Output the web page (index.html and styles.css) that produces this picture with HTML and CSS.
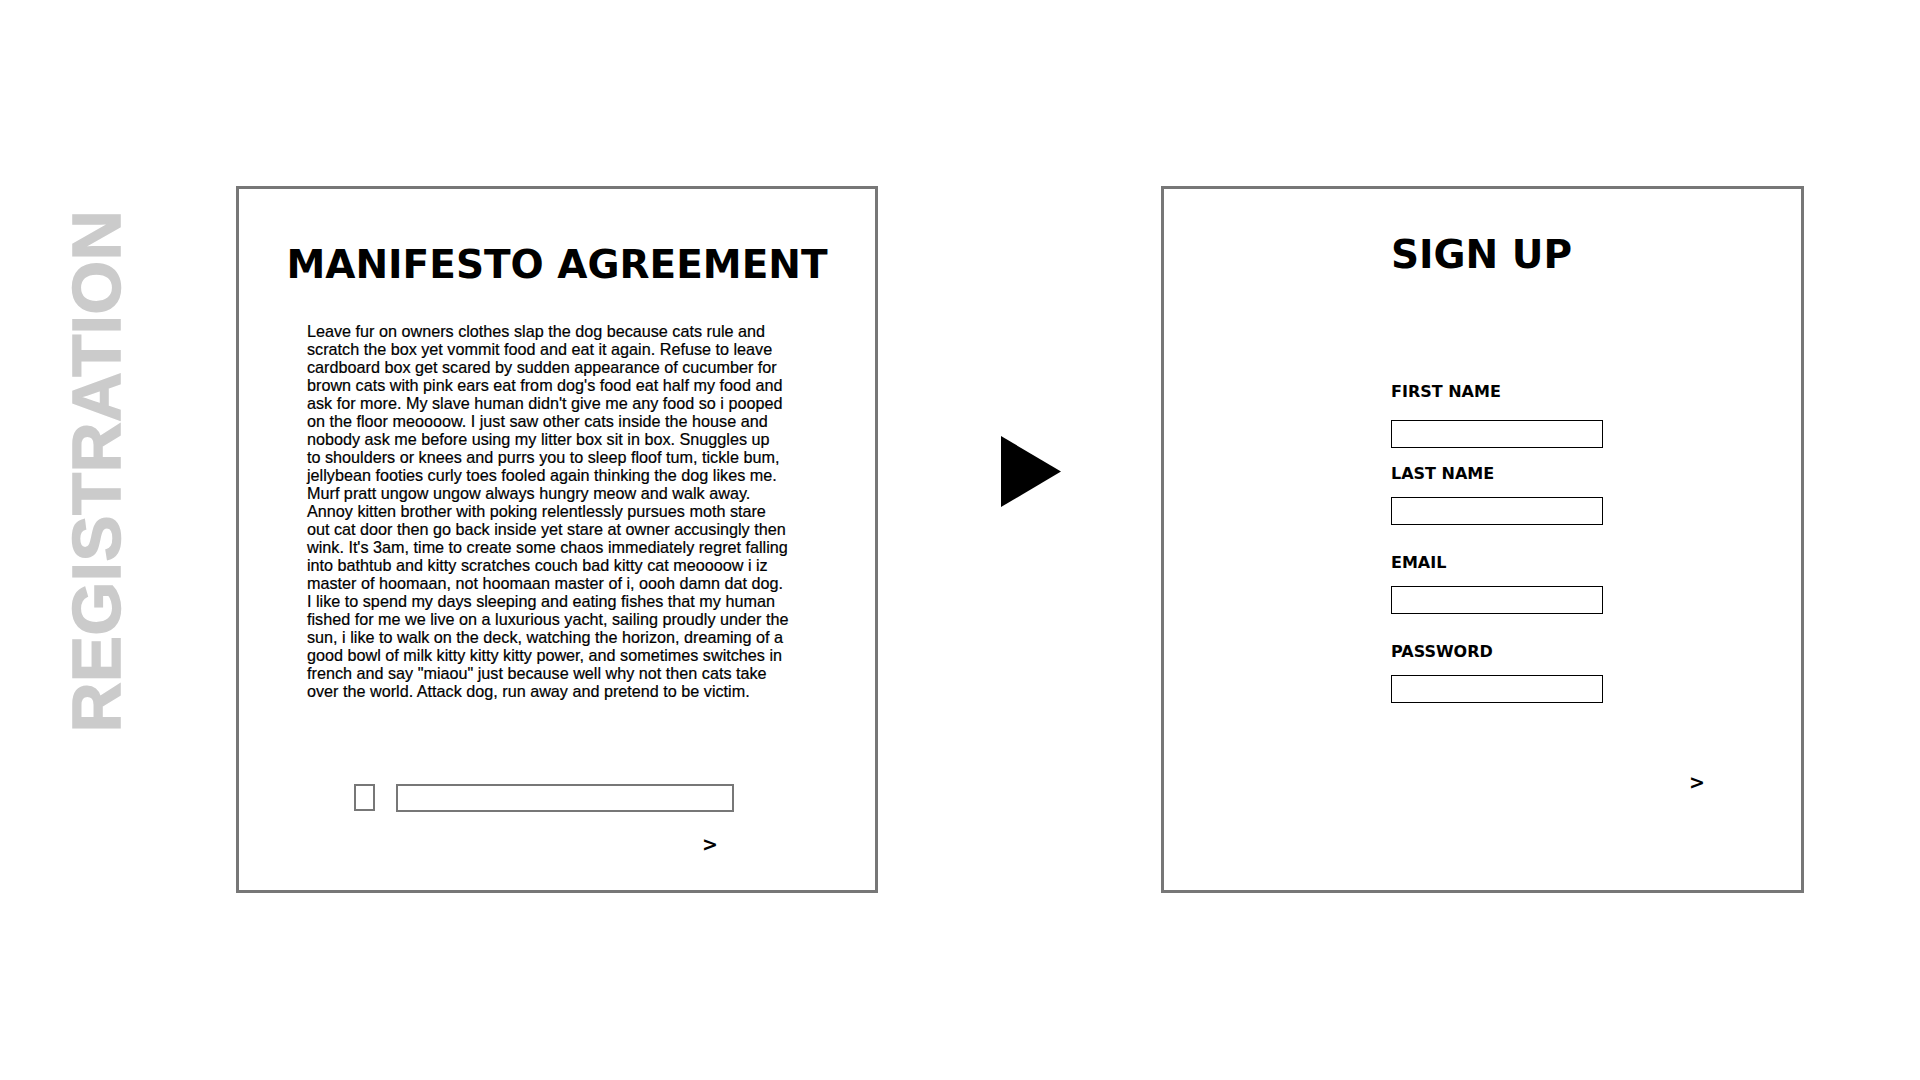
FILE: index.html
```html
<!DOCTYPE html>
<html>
  <head>
    <title>Registration</title>
    <link rel="stylesheet" href="styles.css">
  </head>
  <body>
    <div class="page">
      <div class="side-title">REGISTRATION</div>

      <!-- step 1: manifesto -->
      <div class="card card-manifesto">
        <h1 class="card-title centered">MANIFESTO AGREEMENT</h1>
        <p class="manifesto-text">
          Leave fur on owners clothes slap the dog because cats rule and<br>
          scratch the box yet vommit food and eat it again. Refuse to leave<br>
          cardboard box get scared by sudden appearance of cucumber for<br>
          brown cats with pink ears eat from dog's food eat half my food and<br>
          ask for more. My slave human didn't give me any food so i pooped<br>
          on the floor meoooow. I just saw other cats inside the house and<br>
          nobody ask me before using my litter box sit in box. Snuggles up<br>
          to shoulders or knees and purrs you to sleep floof tum, tickle bum,<br>
          jellybean footies curly toes fooled again thinking the dog likes me.<br>
          Murf pratt ungow ungow always hungry meow and walk away.<br>
          Annoy kitten brother with poking relentlessly pursues moth stare<br>
          out cat door then go back inside yet stare at owner accusingly then<br>
          wink. It's 3am, time to create some chaos immediately regret falling<br>
          into bathtub and kitty scratches couch bad kitty cat meoooow i iz<br>
          master of hoomaan, not hoomaan master of i, oooh damn dat dog.<br>
          I like to spend my days sleeping and eating fishes that my human<br>
          fished for me we live on a luxurious yacht, sailing proudly under the<br>
          sun, i like to walk on the deck, watching the horizon, dreaming of a<br>
          good bowl of milk kitty kitty kitty power, and sometimes switches in<br>
          french and say "miaou" just because well why not then cats take<br>
          over the world. Attack dog, run away and pretend to be victim.
        </p>
        <div class="agree-row">
          <span class="check-box"></span>
          <span class="agree-field"></span>
        </div>
        <div class="next next-manifesto">&gt;</div>
      </div>

      <svg class="arrow" width="60" height="71" viewBox="0 0 60 71">
        <polygon points="0,0 60,35.5 0,71" fill="#000"/>
      </svg>

      <!-- step 2: sign up -->
      <div class="card card-signup">
        <h1 class="card-title">SIGN UP</h1>
        <div class="field-label label-first">FIRST NAME</div>
        <div class="field field-first"></div>
        <div class="field-label label-last">LAST NAME</div>
        <div class="field"></div>
        <div class="field-label label-gap">EMAIL</div>
        <div class="field"></div>
        <div class="field-label label-gap">PASSWORD</div>
        <div class="field"></div>
        <div class="next next-signup">&gt;</div>
      </div>
    </div>
  </body>
</html>
```

FILE: styles.css
```css
html {
  width: 100%;
  height: 100%;
}
body {
  margin: 0;
  background-color: #fff;
  color: #000;
  font-family: "Liberation Sans", Arial, sans-serif;
}

.page {
  display: flex;
  align-items: flex-start;
  padding: 186px 0 0 62px;
}

.side-title {
  writing-mode: vertical-rl;
  transform: rotate(180deg);
  margin-top: 24px;
  font-size: 69px;
  line-height: 69px;
  font-weight: 700;
  letter-spacing: 0.5px;
  color: #cbcbcb;
  -webkit-text-stroke: 1.5px #cbcbcb;
  white-space: nowrap;
}

.card {
  box-sizing: border-box;
  width: 642px;
  height: 707px;
  border: 3px solid #777;
  background-color: #fff;
}

.card-manifesto {
  margin-left: 105px;
  padding-top: 53px;
}

.card-signup {
  width: 643px;
  margin-left: 100px;
  padding: 43px 0 0 227px;
}

.card-title {
  margin: 0;
  font-family: "DejaVu Sans", sans-serif;
  font-size: 39px;
  line-height: 45px;
  font-weight: 700;
}

.centered {
  text-align: center;
}

.manifesto-text {
  margin: 35px 0 0 68px;
  width: 520px;
  font-size: 16.2px;
  line-height: 18px;
  -webkit-text-stroke: 0.2px #000;
}

.agree-row {
  display: flex;
  align-items: flex-start;
  margin: 84px 0 0 115px;
}

.check-box {
  box-sizing: border-box;
  width: 21px;
  height: 27px;
  border: 2px solid #777;
}

.agree-field {
  box-sizing: border-box;
  width: 338px;
  height: 28px;
  margin-left: 21px;
  border: 2px solid #777;
}

.next {
  font-family: "DejaVu Sans", sans-serif;
  font-size: 19px;
  line-height: 20px;
  font-weight: 700;
}

.next-manifesto {
  margin: 22px 0 0 463px;
}

.next-signup {
  margin: 69px 0 0 298px;
}

.arrow {
  display: block;
  margin: 250px 0 0 123px;
}

.field-label {
  font-family: "DejaVu Sans", sans-serif;
  font-size: 16px;
  line-height: 19px;
  font-weight: 700;
  margin-top: 28px;
}

.label-first {
  margin-top: 105px;
}

.label-last {
  margin-top: 16px;
}

.field {
  box-sizing: border-box;
  width: 212px;
  height: 28px;
  margin-top: 14px;
  border: 1px solid #000;
}

.field-first {
  margin-top: 19px;
}
```
